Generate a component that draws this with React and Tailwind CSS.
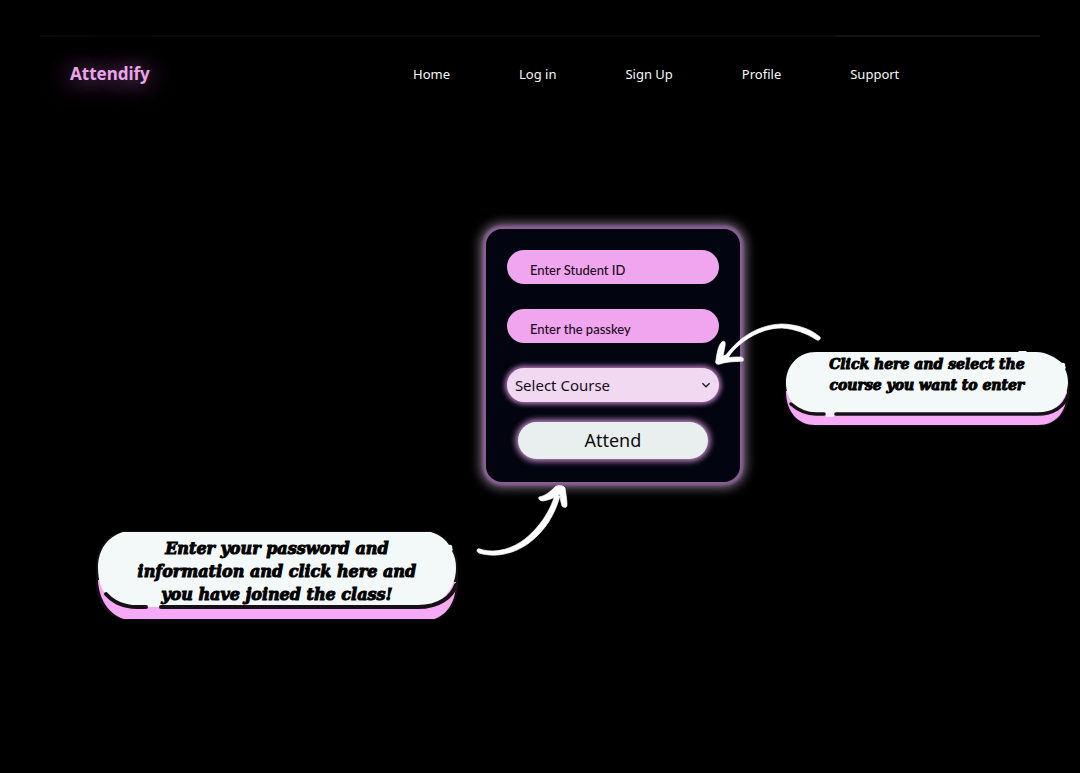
const links = ["Home", "Log in", "Sign Up", "Profile", "Support"];

function Header() {
  return (
    <header className="mx-10">
      <div className="h-[2px] bg-linear-to-r from-[#090909] from-79% to-[#131313] to-80%" />
      <div className="flex items-center pt-[23px] pl-[30px]">
        <a
          href="#"
          className="w-[343px] shrink-0 font-['Noto_Sans',sans-serif] text-[17px] leading-7 font-bold text-[#eba4ea] [text-shadow:0_0_24px_#8f6292,0_4px_32px_#8f6292,0_8px_48px_#7a5a7e]"
        >
          Attendify
        </a>
        <nav className="flex gap-[69px] font-['Noto_Sans',sans-serif] text-[13px] leading-7 text-[#f8f8f8]">
          {links.map((link) => (
            <a key={link} href="#" className="whitespace-nowrap">
              {link}
            </a>
          ))}
        </nav>
      </div>
    </header>
  );
}

function AttendForm() {
  return (
    <form
      onSubmit={(event) => event.preventDefault()}
      className="flex w-full flex-col rounded-2xl bg-[#02040f] px-[21px] pt-[21px] pb-[23px] shadow-[0_0_3px_3px_#8d5f98,0_0_12px_5px_#8b7a92]"
    >
      <input
        aria-label="Student ID"
        placeholder="Enter Student ID"
        className="h-[34px] w-full rounded-full bg-[#f0a6ee] px-[23px] pt-[5px] font-['Lato',sans-serif] text-[13px] font-medium text-[#1c0b20] outline-none placeholder:text-[#1c0b20]"
      />
      <input
        aria-label="Passkey"
        type="password"
        placeholder="Enter the passkey"
        className="mt-[25px] h-[34px] w-full rounded-full bg-[#f0a6ee] px-[23px] pt-[5px] font-['Lato',sans-serif] text-[13px] font-medium text-[#1c0b20] outline-none placeholder:text-[#1c0b20]"
      />
      <div className="relative mt-[25px]">
        <select
          aria-label="Course"
          className="block h-[34px] w-full appearance-none rounded-full bg-[#f1d9f1] pr-8 pl-2 font-['Noto_Sans',sans-serif] text-[15px] text-[#160d18] shadow-[0_0_5px_2px_#c07fc4] outline-none"
        >
          <option>Select Course</option>
        </select>
        <svg
          className="pointer-events-none absolute top-[13px] right-2 h-2 w-[10px]"
          viewBox="0 0 10 8"
          fill="none"
          stroke="#24152a"
          strokeWidth="1.3"
        >
          <path d="M1.4 2.2 5 5.8 8.6 2.2" />
        </svg>
      </div>
      <button
        type="submit"
        className="mx-[11px] mt-5 h-[37px] rounded-full bg-[#e9efee] pb-px font-['Noto_Sans',sans-serif] text-lg leading-6 text-[#0c0c10] shadow-[0_0_6px_2px_#d395d6]"
      >
        Attend
      </button>
    </form>
  );
}

function PasswordBubble() {
  return (
    <svg className="absolute inset-0 h-full w-full" viewBox="0 0 364 92" fill="none">
      <path d="M28 1C11 5 1 20 1 38v15c0 19 10 33 27 37h311c15-4 24-18 24-36V38c0-17-10-32-27-37Z" fill="#121112" />
      <path d="M3 50c1 19 10 34 26 39h310c13-4 22-17 22-37Z" fill="#f6a9f5" />
      <path d="M28 2h308c9 3 15 8 18 13 2-1 4 1 3 3 1 1 1 2 0 3 3 5 4 11 4 17 0 23-17 39-39 39H40C17 77 3 63 3 38 3 20 12 7 28 2Z" fill="#f3f9f8" />
      <path d="M66 77h257c21 0 34-10 38-22" stroke="#171017" strokeWidth="4" strokeLinecap="round" />
      <path d="M3 51c1 5 3 9 6 13l3 2c8 8 17 12 30 12h10v4H30C15 79 5 68 3 51Z" fill="#f6a9f5" />
      <path d="M11 64c8 9 18 13 31 13h9" stroke="#171017" strokeWidth="4" strokeLinecap="round" />
    </svg>
  );
}

function CourseBubble() {
  return (
    <svg className="absolute inset-0 h-full w-full" viewBox="0 0 286 76" fill="none">
      <path d="M31 1C12 2 1 15 1 32v12c0 17 12 30 30 31h223c18 0 31-14 31-31V32c0-18-13-31-31-31Z" fill="#121112" />
      <path d="M2 40c0 21 12 34 29 34h223c18 0 29-13 29-34Z" fill="#f6a9f5" />
      <path d="M32 1h202c1-2 8-2 9 0h9c11 0 20 6 26 11 2-1 4 1 3 3 1 1 1 2 0 3 2 4 3 9 3 14-1 18-14 31-32 31H32C15 63 2 50 2 32S15 1 32 1Z" fill="#f3f9f8" />
      <path d="M52 63h202c15 0 26-7 30-19" stroke="#171017" strokeWidth="3.5" strokeLinecap="round" />
      <path d="M42 61h8v5h-8Z" fill="#fceefc" />
      <path d="M7 53c8 7 16 10 25 10h8" stroke="#171017" strokeWidth="3.5" strokeLinecap="round" />
    </svg>
  );
}

function CourseArrow() {
  return (
    <svg
      className="pointer-events-none absolute top-[93px] left-[228px] h-[46px] w-[108px]"
      viewBox="0 0 108 46"
      fill="#fff"
      stroke="#fff"
      strokeWidth="0.7"
    >
      <path d="M9 37C22 18 42 3 67 2c15 0 30 5 39 13 1 2-1 4-3 3C92 11 81 7 68 6 47 6 27 18 15 34l-4 6Z" />
      <path d="M8 20c2-2 4 0 3 4L9 34l2 2c5-1 10-1 15-1 3 0 4 2 3 4-6 1-14 0-23 3-4 1-5-1-4-4C3 32 4 23 8 20Z" />
      <path d="M9 34 16 32l-3 7-7 2Z" />
    </svg>
  );
}

function AttendArrow() {
  return (
    <svg
      className="pointer-events-none absolute top-[254px] left-[-10px] h-[76px] w-[94px]"
      viewBox="0 0 94 76"
      fill="#fff"
      stroke="#fff"
      strokeWidth="0.7"
    >
      <path d="M1 67c1-2 3-1 6 0 14 3 29-1 42-11C64 44 74 28 79 12l5 1C79 31 70 47 53 60 38 71 19 75 3 70c-2-1-2-2-2-3Z" />
      <path d="M63 14c6-1 11-5 16-10 3-2 8-2 10 1 1 6 2 12 2 17 0 3-3 3-5 1-1-4-2-7-2-12-6 4-11 6-17 7-3 0-5-2-4-4Z" />
    </svg>
  );
}

export default function App() {
  return (
    <div className="min-h-screen bg-black pt-[35px]">
      <Header />
      <main className="mt-[141px] grid grid-cols-[1fr_254px_1fr] items-start pb-10 min-[1000px]:grid-cols-[45fr_254px_minmax(286px,31.5fr)]">
        <aside className="relative mt-[301px] mr-[27px] flex h-[92px] w-[364px] justify-center justify-self-end pt-[7px]">
          <PasswordBubble />
          <p className="relative text-center font-['DejaVu_Serif',serif] text-base leading-[23px] font-bold whitespace-nowrap text-black italic [-webkit-text-stroke:1px_black]">
            Enter your password and
            <br />
            information and click here and
            <br />
            you have joined the class!
          </p>
        </aside>
        <section className="relative" aria-label="Attendance">
          <AttendForm />
          <CourseArrow />
          <AttendArrow />
        </section>
        <aside className="relative mt-[122px] ml-11 flex h-[76px] w-[286px] justify-center pt-[3px]">
          <CourseBubble />
          <p className="relative text-center font-['DejaVu_Serif',serif] text-sm leading-[21px] font-bold whitespace-nowrap text-black italic [-webkit-text-stroke:1px_black]">
            Click here and select the
            <br />
            course you want to enter
          </p>
        </aside>
      </main>
    </div>
  );
}
